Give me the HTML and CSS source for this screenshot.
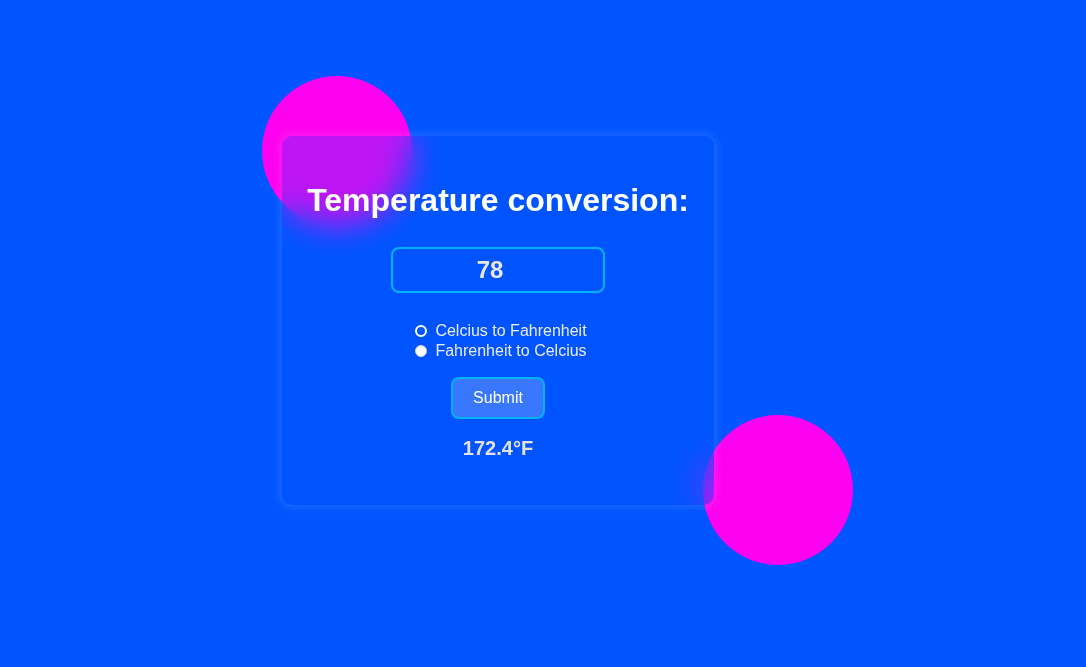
FILE: index.html
```html
<!DOCTYPE html>
<html>
<head>
<meta charset="utf-8">
<link rel="stylesheet" href="styles.css">
</head>
<body>
<div class="circle circle-a"></div>
<div class="circle circle-b"></div>
<div class="stage">
  <div class="card">
    <h1 class="title">Temperature conversion:</h1>
    <input class="temp" type="text" value="78">
    <div class="options">
      <label class="opt"><span class="radio ring"></span>Celcius to Fahrenheit</label>
      <label class="opt"><span class="radio dot"></span>Fahrenheit to Celcius</label>
    </div>
    <button class="submit">Submit</button>
    <div class="result">172.4°F</div>
  </div>
</div>
</body>
</html>
```

FILE: styles.css
```css
html, body {
  margin: 0;
  padding: 0;
}
body {
  background: #0055ff;
  font-family: "Liberation Sans", Arial, sans-serif;
  width: 1086px;
  height: 667px;
  overflow: hidden;
  position: relative;
}
.circle {
  position: absolute;
  width: 150px;
  height: 150px;
  border-radius: 50%;
  background: #ff00f0;
}
.circle-a {
  left: 262px;
  top: 76px;
}
.circle-b {
  left: 703px;
  top: 415px;
}
.stage {
  padding: 136px 0 0 282px;
  position: relative;
}
.card {
  width: 432px;
  height: 369px;
  box-sizing: border-box;
  border-radius: 10px;
  background: rgba(0, 85, 255, 0.25);
  backdrop-filter: blur(16px);
  box-shadow: 0 0 10px 2px rgba(255, 255, 255, 0.13);
  display: flex;
  flex-direction: column;
  align-items: center;
  padding-top: 46px;
  position: relative;
}
.title {
  margin: 0;
  font-size: 32px;
  line-height: 36px;
  font-weight: bold;
  color: #ffffff;
}
.temp {
  margin-top: 29px;
  width: 214px;
  height: 46px;
  box-sizing: border-box;
  border: 2px solid #00b4ff;
  border-radius: 8px;
  background: transparent;
  color: #e8e8e8;
  font-family: "Liberation Sans", Arial, sans-serif;
  font-size: 24px;
  font-weight: bold;
  text-align: center;
  outline: none;
  padding: 0 16px 0 0;
}
.options {
  margin-top: 28px;
  display: flex;
  flex-direction: column;
  margin-left: 6px;
}
.opt {
  display: flex;
  align-items: center;
  height: 20px;
  font-size: 16px;
  color: #ececec;
}
.radio {
  width: 12px;
  height: 12px;
  box-sizing: border-box;
  border-radius: 50%;
  margin-right: 8px;
}
.ring {
  border: 2px solid #ffffff;
  background: #0055ff;
}
.dot {
  background: #ffffff;
  border: 1px solid #cfd6e6;
}
.submit {
  margin-top: 16px;
  width: 94px;
  height: 42px;
  box-sizing: border-box;
  border: 2px solid #00b4ff;
  border-radius: 8px;
  background: #3a77ff;
  color: #ffffff;
  font-family: "Liberation Sans", Arial, sans-serif;
  font-size: 16px;
  padding: 0;
}
.result {
  margin-top: 17px;
  font-size: 20px;
  line-height: 24px;
  font-weight: bold;
  color: #e2e2e2;
}
```
